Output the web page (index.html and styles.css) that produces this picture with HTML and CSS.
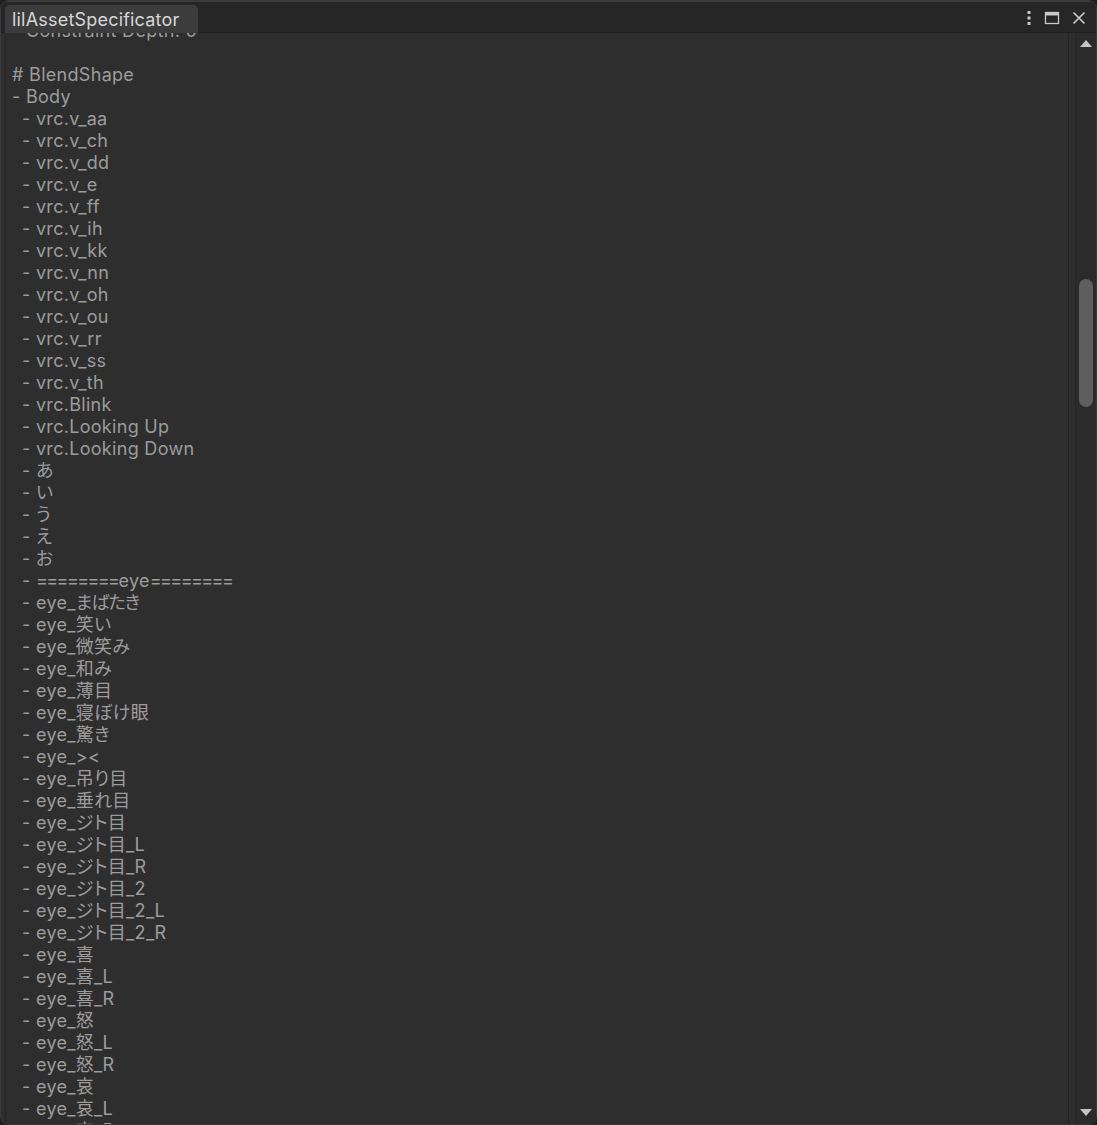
FILE: index.html
```html
<!DOCTYPE html>
<html>
<head>
<meta charset="utf-8">
<link rel="stylesheet" href="styles.css">
</head>
<body>
<div class="window">
  <div class="tabbar">
    <div class="tab">lilAssetSpecificator</div>
    <div class="tab-tools">
      <svg class="ico" width="8" height="16" viewBox="0 0 8 16"><rect x="2.5" y="1" width="3" height="3" fill="#c8c8c8"/><rect x="2.5" y="6.5" width="3" height="3" fill="#c8c8c8"/><rect x="2.5" y="12" width="3" height="3" fill="#c8c8c8"/></svg>
      <svg class="ico" width="16" height="16" viewBox="0 0 16 16"><rect x="1.5" y="2.5" width="13" height="11" fill="none" stroke="#c8c8c8" stroke-width="1.3"/><rect x="1.5" y="2.5" width="13" height="3" fill="#c8c8c8"/></svg>
      <svg class="ico" width="16" height="16" viewBox="0 0 16 16"><path d="M2.5 2.5 L13.5 13.5 M13.5 2.5 L2.5 13.5" stroke="#c8c8c8" stroke-width="1.7"/></svg>
    </div>
  </div>
  <div class="body">
    <div class="textarea">
      <div class="lines">
<div class="l i3">Constraint Depth: 0</div>
<div class="l"> </div>
<div class="l"># BlendShape</div>
<div class="l">- Body</div>
<div class="l i1">- vrc.v_aa</div>
<div class="l i1">- vrc.v_ch</div>
<div class="l i1">- vrc.v_dd</div>
<div class="l i1">- vrc.v_e</div>
<div class="l i1">- vrc.v_ff</div>
<div class="l i1">- vrc.v_ih</div>
<div class="l i1">- vrc.v_kk</div>
<div class="l i1">- vrc.v_nn</div>
<div class="l i1">- vrc.v_oh</div>
<div class="l i1">- vrc.v_ou</div>
<div class="l i1">- vrc.v_rr</div>
<div class="l i1">- vrc.v_ss</div>
<div class="l i1">- vrc.v_th</div>
<div class="l i1">- vrc.Blink</div>
<div class="l i1">- vrc.Looking Up</div>
<div class="l i1">- vrc.Looking Down</div>
<div class="l i1">- あ</div>
<div class="l i1">- い</div>
<div class="l i1">- う</div>
<div class="l i1">- え</div>
<div class="l i1">- お</div>
<div class="l i1">- <span class="eq">========</span>eye<span class="eq">========</span></div>
<div class="l i1">- eye_<span class="kana">まばたき</span></div>
<div class="l i1">- eye_笑い</div>
<div class="l i1">- eye_微笑み</div>
<div class="l i1">- eye_和み</div>
<div class="l i1">- eye_薄目</div>
<div class="l i1">- eye_寝ぼけ眼</div>
<div class="l i1">- eye_驚き</div>
<div class="l i1">- eye_&gt;&lt;</div>
<div class="l i1">- eye_吊り目</div>
<div class="l i1">- eye_垂れ目</div>
<div class="l i1">- eye_ジト目</div>
<div class="l i1">- eye_ジト目_L</div>
<div class="l i1">- eye_ジト目_R</div>
<div class="l i1">- eye_ジト目_2</div>
<div class="l i1">- eye_ジト目_2_L</div>
<div class="l i1">- eye_ジト目_2_R</div>
<div class="l i1">- eye_喜</div>
<div class="l i1">- eye_喜_L</div>
<div class="l i1">- eye_喜_R</div>
<div class="l i1">- eye_怒</div>
<div class="l i1">- eye_怒_L</div>
<div class="l i1">- eye_怒_R</div>
<div class="l i1">- eye_哀</div>
<div class="l i1">- eye_哀_L</div>
<div class="l i1">- eye_哀_R</div>
      </div>
    </div>
    <div class="scrollbar">
      <div class="arrow up"></div>
      <div class="track"><div class="thumb"></div></div>
      <div class="arrow down"></div>
    </div>
  </div>
</div>
</body>
</html>
```

FILE: styles.css
```css
html, body {
  margin: 0;
  padding: 0;
  background: #1e1e1e;
  width: 1097px;
  height: 1125px;
  overflow: hidden;
}

.window {
  box-sizing: border-box;
  width: 1097px;
  height: 1125px;
  background: #282828;
  border: 1px solid #3a3a3a;
  border-radius: 9px;
  overflow: hidden;
  display: flex;
  flex-direction: column;
  font-family: "Inter", "Noto Sans CJK JP", sans-serif;
}

.tabbar {
  height: 30px;
  flex: none;
  background: #262626;
  border-top: 1px solid #3c3c3c;
  display: flex;
  align-items: flex-end;
  padding-left: 4px;
  position: relative;
  border-bottom: 1px solid #1f1f1f;
}

.tab {
  height: 28px;
  width: 193px;
  box-sizing: border-box;
  background: #3c3c3c;
  border-radius: 5px 5px 0 0;
  color: #d6d6d6;
  font-size: 18px;
  letter-spacing: 0.2px;
  line-height: 29px;
  padding-left: 7px;
  white-space: nowrap;
  margin-bottom: -1px;
}

.tab-tools {
  margin-left: auto;
  align-self: center;
  display: flex;
  align-items: center;
  gap: 11px;
  padding-right: 9px;
  margin-top: 1px;
}

.ico { display: block; }

.body {
  flex: 1;
  display: flex;
  min-height: 0;
  background: #2e2e2e;
}

.textarea {
  flex: 1;
  overflow: hidden;
  border-left: 1px solid #262626;
  margin-left: 4px;
  background: #2e2e2e;
}

.lines {
  margin-top: -13px;
  padding-left: 6px;
  color: #9c9c9c;
  font-size: 18px;
  letter-spacing: 0.3px;
  line-height: 22px;
  font-feature-settings: "palt";
}

.l { height: 22px; white-space: pre; }
.i1 { padding-left: 10px; }
.i3 { padding-left: 14px; }
.eq { letter-spacing: -1.6px; }
.kana { letter-spacing: -1px; }

.scrollbar {
  width: 27px;
  flex: none;
  display: flex;
  flex-direction: column;
  align-items: center;
  background: #2b2b2b;
  border-left: 1px solid #232323;
  box-shadow: inset 6px 0 0 #2e2e2e, inset 7px 0 0 #262626;
}

.arrow {
  width: 0;
  height: 0;
  border-left: 6px solid transparent;
  border-right: 6px solid transparent;
  margin-left: 6px;
}
.arrow.up {
  border-bottom: 7px solid #c4c4c4;
  margin-top: 7px;
}
.arrow.down {
  border-top: 7px solid #c4c4c4;
  margin-bottom: 8px;
}

.track {
  flex: 1;
  width: 100%;
  position: relative;
}

.thumb {
  position: absolute;
  left: 10px;
  top: 232px;
  width: 14px;
  height: 128px;
  border-radius: 7px;
  background: #5e5e5e;
}
```
